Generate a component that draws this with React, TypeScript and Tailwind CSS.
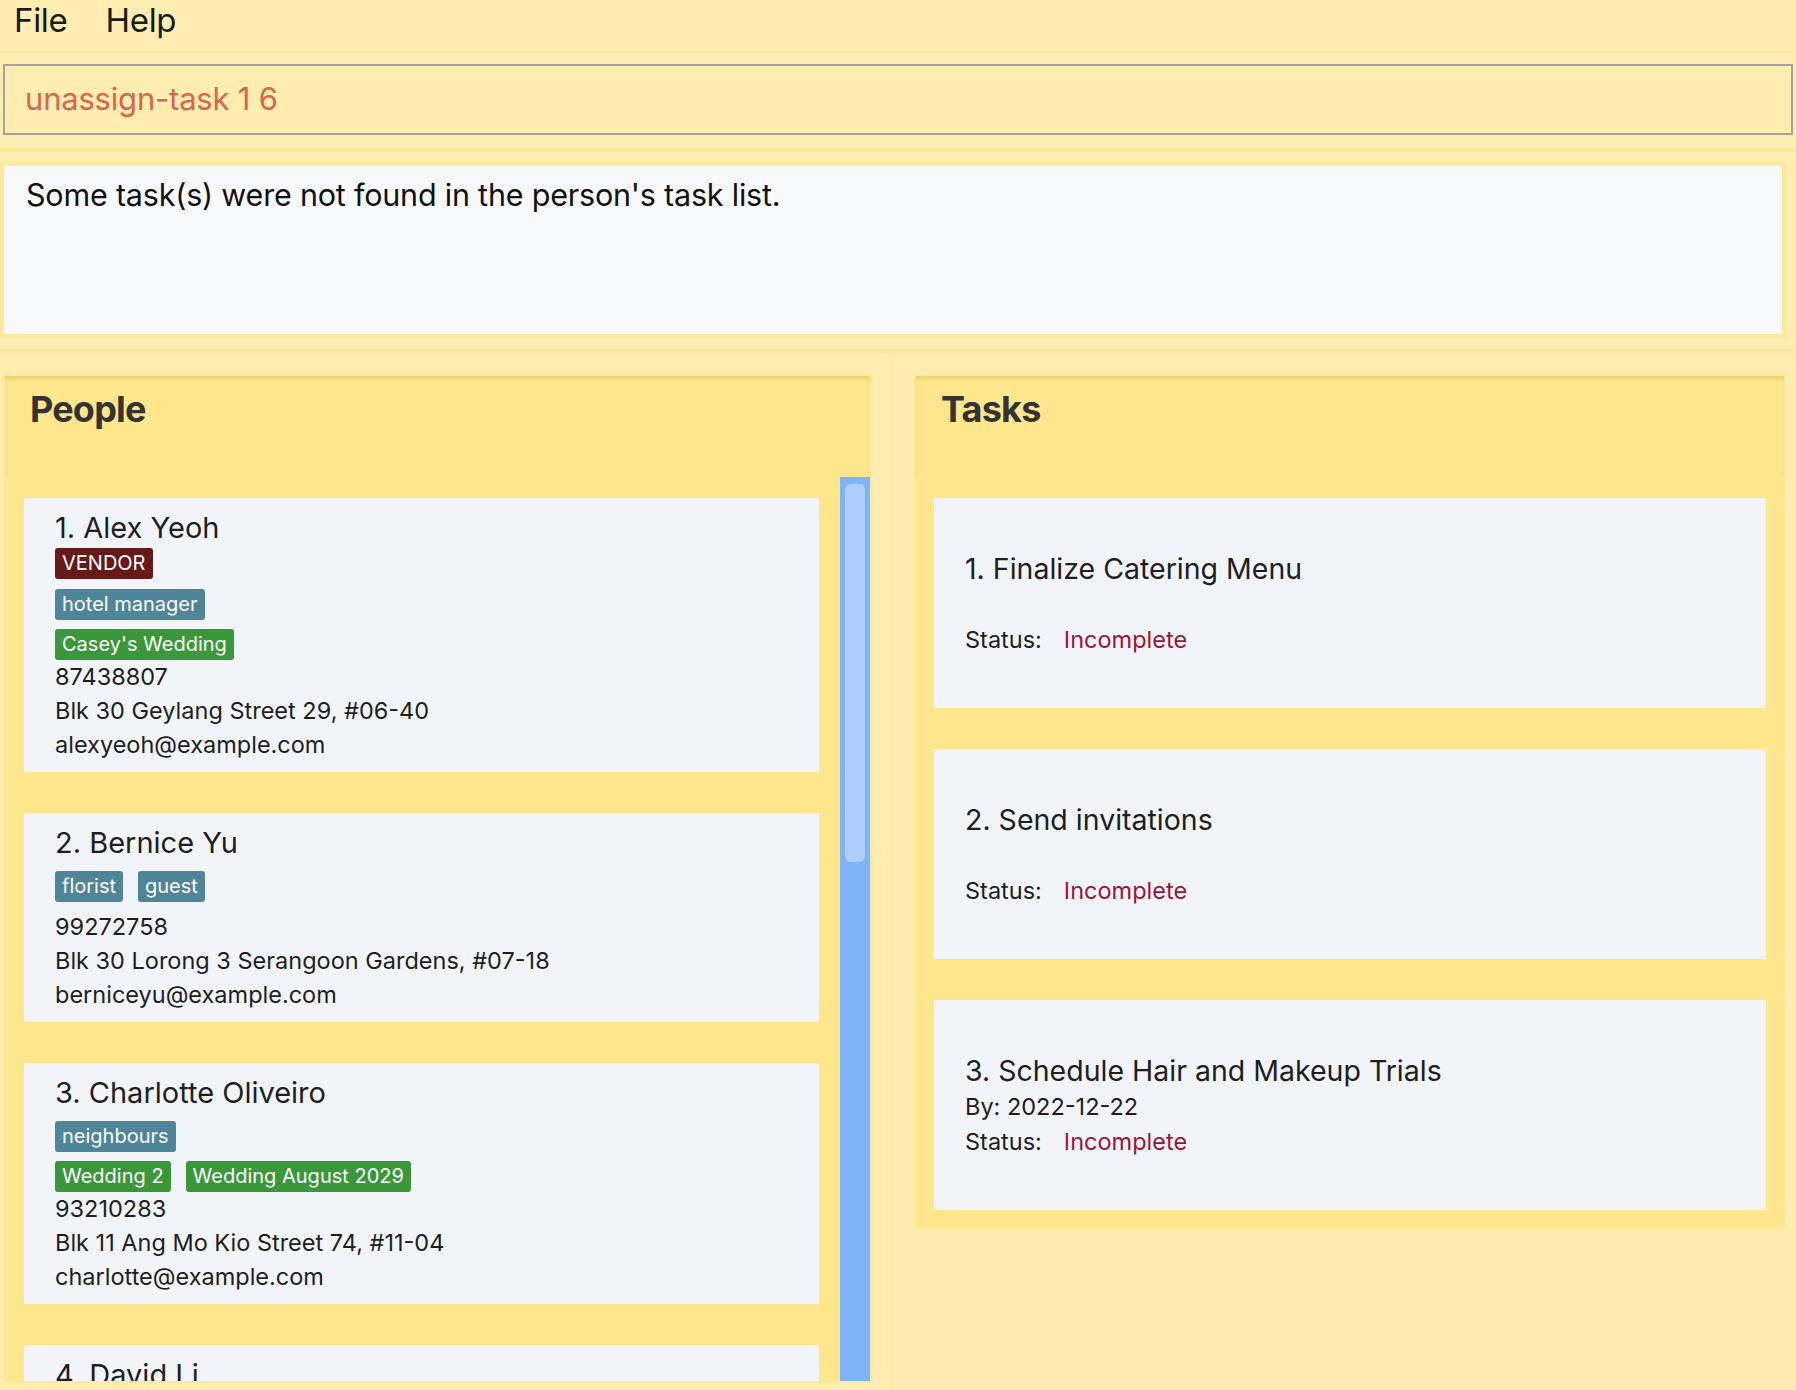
import React from 'react';

type Tag = { label: string; kind: 'role' | 'tag' | 'wedding' };

type Person = {
  name: string;
  roles: string[];
  tags: string[];
  weddings: string[];
  phone: string;
  address: string;
  email: string;
};

const people: Person[] = [
  {
    name: '1. Alex Yeoh',
    roles: ['VENDOR'],
    tags: ['hotel manager'],
    weddings: ["Casey's Wedding"],
    phone: '87438807',
    address: 'Blk 30 Geylang Street 29, #06-40',
    email: 'alexyeoh@example.com',
  },
  {
    name: '2. Bernice Yu',
    roles: [],
    tags: ['florist', 'guest'],
    weddings: [],
    phone: '99272758',
    address: 'Blk 30 Lorong 3 Serangoon Gardens, #07-18',
    email: 'berniceyu@example.com',
  },
  {
    name: '3. Charlotte Oliveiro',
    roles: [],
    tags: ['neighbours'],
    weddings: ['Wedding 2', 'Wedding August 2029'],
    phone: '93210283',
    address: 'Blk 11 Ang Mo Kio Street 74, #11-04',
    email: 'charlotte@example.com',
  },
  {
    name: '4. David Li',
    roles: [],
    tags: ['friends'],
    weddings: [],
    phone: '91031282',
    address: 'Blk 436 Serangoon Gardens Street 26, #16-43',
    email: 'lidavid@example.com',
  },
];

const tasks = [
  { title: '1. Finalize Catering Menu', by: '' },
  { title: '2. Send invitations', by: '' },
  { title: '3. Schedule Hair and Makeup Trials', by: 'By: 2022-12-22' },
];

const TagChip = ({ tag }: { tag: Tag }) => {
  const color =
    tag.kind === 'role' ? 'bg-[#661919]' : tag.kind === 'tag' ? 'bg-[#4f8599]' : 'bg-[#3a983a]';
  return (
    <span className={`${color} text-white text-[20px] leading-[31px] h-[31px] px-[7px] rounded-[3px]`}>
      {tag.label}
    </span>
  );
};

const PersonCard = ({ p }: { p: Person }) => (
  <div className="bg-[#f1f5fa] pl-[31px] pt-[12px] pb-[10px] shrink-0">
    <div className="text-[29px] leading-[36px] text-[#1e1e1e]">{p.name}</div>
    {p.roles.length > 0 && (
      <div className="flex flex-wrap gap-[15px] mt-[2px]">
        {p.roles.map((r) => (
          <TagChip key={r} tag={{ label: r, kind: 'role' }} />
        ))}
      </div>
    )}
    {p.tags.length > 0 && (
      <div className="flex flex-wrap gap-[15px] mt-[10px]">
        {p.tags.map((r) => (
          <TagChip key={r} tag={{ label: r, kind: 'tag' }} />
        ))}
      </div>
    )}
    <div className={`flex flex-wrap gap-[15px] ${p.weddings.length > 0 ? 'mt-[9px]' : 'mt-[8px]'}`}>
      {p.weddings.map((r) => (
        <TagChip key={r} tag={{ label: r, kind: 'wedding' }} />
      ))}
    </div>
    <div className="text-[23.5px] leading-[34px] text-[#1e1e1e]">
      <div>{p.phone}</div>
      <div>{p.address}</div>
      <div>{p.email}</div>
    </div>
  </div>
);

const TaskCard = ({ title, by }: { title: string; by: string }) => (
  <div className="bg-[#f1f5fa] h-[210px] pl-[31px] pt-[53px] shrink-0">
    <div className="text-[28.5px] leading-[36px] text-[#1e1e1e]">{title}</div>
    <div className="text-[23.5px] leading-[35px] h-[35px] text-[#1e1e1e]">{by}</div>
    <div className="text-[23.5px] leading-[35px] text-[#1e1e1e] flex gap-[22px]">
      <span>Status:</span>
      <span className="text-[#9c1438]">Incomplete</span>
    </div>
  </div>
);

const PanelHeader = ({ title }: { title: string }) => (
  <div className="h-[101px] pl-[25px] pt-[13px] shadow-[inset_0_4px_4px_-2px_rgba(200,170,60,0.45)]">
    <span className="text-[36px] leading-[40px] font-bold text-[#333] tracking-[-0.8px]">{title}</span>
  </div>
);

export default function App() {
  return (
    <div
      className="h-[1390px] w-full bg-[#feedb0] flex flex-col overflow-hidden"
      style={{ fontFamily: 'Inter, "Noto Sans", sans-serif' }}
    >
      {/* menu */}
      <div className="h-[53px] flex items-center gap-[38px] pl-[14px] pb-[10px] text-[33px] tracking-[-0.3px] text-[#1a1a1a] border-b-2 border-[#fde9a0] shrink-0">
        <span>File</span>
        <span>Help</span>
      </div>

      {/* command box */}
      <div className="h-[95px] pt-[11px] px-[3px] shrink-0">
        <div className="h-[71px] border-2 border-[#a3a3a3] flex items-center pl-[20px] text-[31px] tracking-[-0.2px] text-[#d9644f]">
          unassign-task 1 6
        </div>
      </div>
      <div className="h-[4px] bg-[#fde89e] shrink-0" />

      {/* result */}
      <div className="h-[197px] pt-[10px] pr-[10px] shrink-0">
        <div className="h-[176px] border-4 border-[#fde89b] bg-[#f8f9fb] pl-[22px] pt-[9px] text-[30.5px] leading-[40px] tracking-[-0.2px] text-[#111]">
          Some task(s) were not found in the person's task list.
        </div>
      </div>
      <div className="h-[5px] bg-[#fde89e] shrink-0" />

      {/* panels */}
      <div className="flex-1 flex min-h-0">
        <div className="w-[891px] pl-[3px] pr-[19px] pt-[20px] pb-[7px] shrink-0 flex flex-col min-h-0">
          <div className="flex-1 bg-[#fde68b] border-2 border-[#fde89b] flex flex-col min-h-0">
            <PanelHeader title="People" />
            <div className="flex-1 flex min-h-0">
              <div className="flex-1 flex flex-col gap-[41px] pl-[19px] pr-[21px] pt-[21px] overflow-hidden">
                {people.map((p) => (
                  <PersonCard key={p.name} p={p} />
                ))}
              </div>
              <div className="w-[30px] bg-[#80b4f8] pt-[7px] px-[5px] shrink-0">
                <div className="h-[378px] bg-[#aecffb] rounded-[6px]" />
              </div>
            </div>
          </div>
        </div>
        <div className="w-[2px] bg-[#fde9a8] shrink-0" />
        <div className="flex-1 pl-[21px] pr-[10px] pt-[20px]">
          <div className="bg-[#fde68b] border-2 border-[#fde89b] flex flex-col">
            <PanelHeader title="Tasks" />
            <div className="flex flex-col gap-[41px] px-[18px] pt-[21px] pb-[18px]">
              {tasks.map((t) => (
                <TaskCard key={t.title} title={t.title} by={t.by} />
              ))}
            </div>
          </div>
        </div>
      </div>
    </div>
  );
}
